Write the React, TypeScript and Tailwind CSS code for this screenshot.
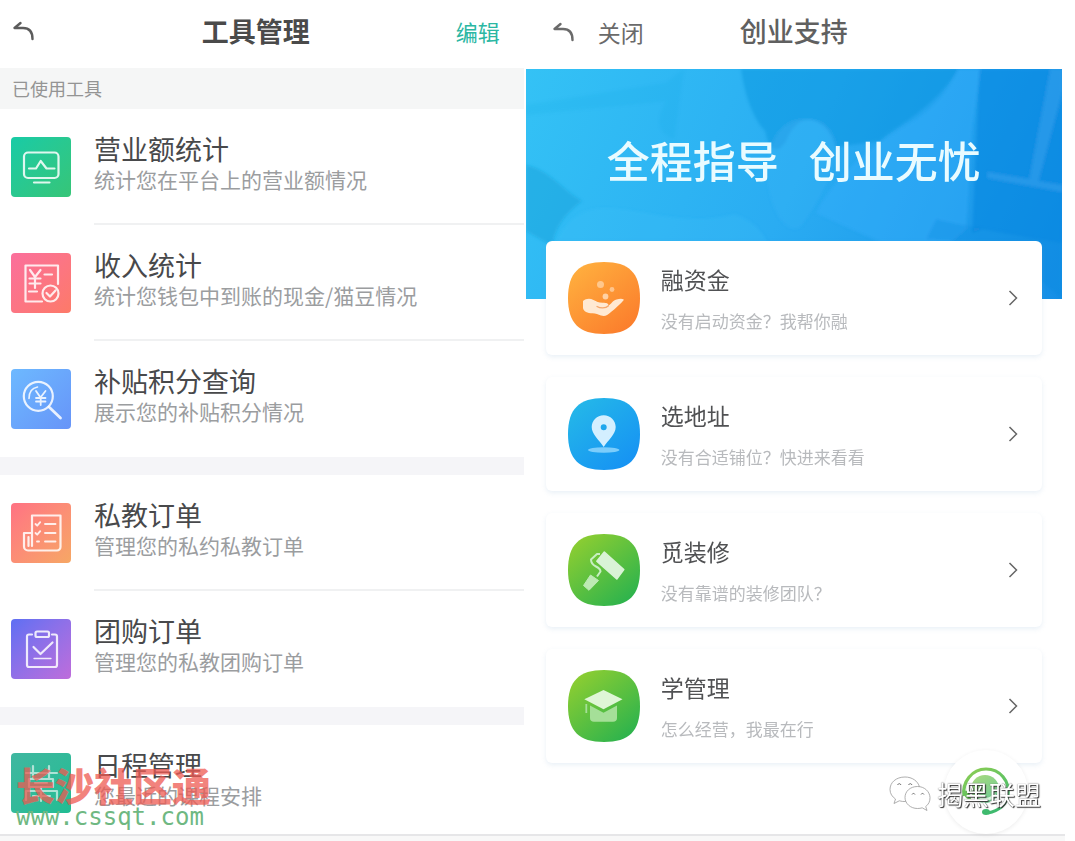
import React from "react";

type Tool = {
    title: string;
    desc: string;
    tile: string;
    icon: React.ReactNode;
};

type Support = {
    title: string;
    desc: string;
    from: string;
    to: string;
    icon: React.ReactNode;
};

const toolGroups: Tool[][] = [
    [
        {
            title: "营业额统计",
            desc: "统计您在平台上的营业额情况",
            tile: "from-[#17cba6] to-[#36c577]",
            icon: (
                <>
                    <rect x="13" y="15.5" width="34.5" height="25.5" rx="4" />
                    <path d="M18 31.5h7l4.7-7.5 5.8 7.5h8M23 45.5h15.5" />
                </>
            ),
        },
        {
            title: "收入统计",
            desc: "统计您钱包中到账的现金/猫豆情况",
            tile: "from-[#fb6f9c] to-[#fd7a68]",
            icon: (
                <>
                    <path d="M47 31V12.5H14.5v36H31" />
                    <path d="M19 17l5 7 5.5-7M24 24v11M18.5 25.5h11M18.5 30.5h11M33.5 21.5H41M18 38.5h8" />
                    <circle cx="39.5" cy="40.5" r="8" />
                    <path d="M35.5 40l3.5 3.5 5.5-6" />
                </>
            ),
        },
        {
            title: "补贴积分查询",
            desc: "展示您的补贴积分情况",
            tile: "from-[#6db9ff] to-[#6794f8]",
            icon: (
                <>
                    <circle cx="27.3" cy="27.3" r="14.5" />
                    <path d="M38 38l11.5 11" strokeWidth="2.8" />
                    <path d="M18 29.5c0-6 3-10.5 8.5-11.5" strokeWidth="1.6" />
                    <path d="M25 22l4.5 6.5L34.5 22M29.7 28.5V36M25 29h9.5M25 32.5h9.5" strokeWidth="1.8" />
                </>
            ),
        },
    ],
    [
        {
            title: "私教订单",
            desc: "管理您的私约私教订单",
            tile: "from-[#ff7283] to-[#f6a764]",
            icon: (
                <>
                    <path d="M21 43V12.5h28.5V44a3.5 3.5 0 0 1-3.5 3.5H17a4 4 0 0 1-4-4V30h8M17.5 34v9" />
                    <path d="M24.5 21l1.7 1.7 3-3.5M24.5 30l1.7 1.7 3-3.5M26 38.5h2M34 21h10.5M34 30h10.5M34 38.5h10.5" strokeWidth="1.9" />
                </>
            ),
        },
        {
            title: "团购订单",
            desc: "管理您的私教团购订单",
            tile: "from-[#5d6ff3] to-[#be6cdb]",
            icon: (
                <>
                    <path d="M21 15.5h-3a2 2 0 0 0-2 2V46a2 2 0 0 0 2 2h26a2 2 0 0 0 2-2V17.5a2 2 0 0 0-2-2h-3" />
                    <rect x="24.5" y="12.5" width="13.5" height="5.5" rx="1.5" />
                    <path d="M22.5 28l7 7 12-11.5" />
                    <path d="M23 39.5h17" strokeWidth="1.3" />
                </>
            ),
        },
    ],
    [
        {
            title: "日程管理",
            desc: "您最近的课程安排",
            tile: "from-[#3fb7a0] to-[#20bd93]",
            icon: (
                <g strokeOpacity="0.6">
                    <path d="M15 20h31M22 13v12M38 13v12M18 26h24v8H18z" />
                    <path d="M15 47V38h31v9M24 30h12M30 34v14M22 43h17" />
                </g>
            ),
        },
    ],
];

const supports: Support[] = [
    {
        title: "融资金",
        desc: "没有启动资金？我帮你融",
        from: "#ffb13f",
        to: "#fb7a2b",
        icon: (
            <g fill="#ffe9d2">
                <circle cx="32.5" cy="22.5" r="3.5" opacity="0.55" />
                <circle cx="44" cy="27.5" r="2.4" opacity="0.55" />
                <circle cx="37.5" cy="34.5" r="2.9" opacity="0.7" />
                <path d="M15 39c3-2.500 7-2.800 10.500-1 3 1.500 5 2.800 9 2.800 4.500 0 6 .8 6 2.700 2.500-1 4-5 8-6 3.500-.8 5.500-1 7.500.2-3.500 4.300-8.500 8.500-13 12.300-4 3.500-6 4.700-10 3.500-3-.9-5-2.200-8.500-2.200-5 0-9-1.800-9.500-5.300z" />
                <path d="M29 44.500c3 1.800 8.500 2.300 11.500-.8" fill="none" stroke="#f6a66a" strokeWidth="1.3" strokeLinecap="round" />
            </g>
        ),
    },
    {
        title: "选地址",
        desc: "没有合适铺位？快进来看看",
        from: "#25b9e8",
        to: "#1590f4",
        icon: (
            <>
                <ellipse cx="35.7" cy="52" rx="15.7" ry="2.8" fill="#7ccdfb" />
                <path
                    fill="#d3efff"
                    fillRule="evenodd"
                    d="M35.700 17.300c-6.800 0-12 5.200-12 11.800 0 7.400 7.800 13.400 12 19.900 4.200-6.500 12-12.500 12-19.900 0-6.600-5.200-11.800-12-11.800zm0 14.900a3 3 0 1 1 0-6 3 3 0 0 1 0 6z"
                />
            </>
        ),
    },
    {
        title: "觅装修",
        desc: "没有靠谱的装修团队？",
        from: "#93cf30",
        to: "#25b14f",
        icon: (
            <>
                <path d="M32 20h-3l-6 5.5c0 4 2 5.500 5 7s4.500 3 4.500 5l-3.500 5" fill="none" stroke="#c8efc2" strokeWidth="2" strokeLinejoin="round" />
                <path d="M36.300 18l19.500 17.500-7 9.500-20-17.700z" fill="#d9f3d6" stroke="#d9f3d6" strokeWidth="1.500" strokeLinejoin="round" />
                <path d="M22.500 41l8 5.500L21 56.300 15.500 51.500z" fill="#bdeab4" stroke="#bdeab4" strokeLinejoin="round" />
            </>
        ),
    },
    {
        title: "学管理",
        desc: "怎么经营，我最在行",
        from: "#93cf30",
        to: "#25b14f",
        icon: (
            <>
                <path d="M16.300 29.300L35.500 20l19 9.300-19 10z" fill="#dff6d6" />
                <path d="M22 35.500l13.500 7.200L49 35.500V48c0 2.500-1.500 3.700-4 3.700H26c-2.500 0-4-1.200-4-3.700z" fill="#a5df98" />
                <path d="M18.300 34v9" stroke="#a5df98" strokeWidth="1.8" />
            </>
        ),
    },
];

function BackArrow() {
    return (
        <svg width="22" height="20" viewBox="0 0 22 20" fill="none" stroke="currentColor" strokeWidth="2.4" strokeLinecap="round" strokeLinejoin="round">
            <path d="M8.500 2L2.500 7H11c6 0 9.500 4 9.500 11" />
        </svg>
    );
}

function ToolRow({ tool, divided }: { tool: Tool; divided: boolean }) {
    return (
        <a href="#tool" className="flex h-[116px] items-center pl-[11px]">
            <span className={`h-[60px] w-[60px] shrink-0 rounded bg-linear-135 ${tool.tile}`}>
                <svg width="60" height="60" viewBox="0 0 60 60" fill="none" stroke="#fff" strokeOpacity="0.85" strokeWidth="2.2" strokeLinecap="round" strokeLinejoin="round">
                    {tool.icon}
                </svg>
            </span>
            <span className={`ml-[23px] flex h-full flex-1 flex-col justify-center border-b-2 pb-1 ${divided ? "border-[#f0f1f2]" : "border-transparent"}`}>
                <span className="text-[27px] leading-[30px] text-[#48494b]">{tool.title}</span>
                <span className="text-[21px] leading-[30px] text-[#9b9d9f]">{tool.desc}</span>
            </span>
        </a>
    );
}

function ToolsPanel() {
    return (
        <section className="relative w-[48.9%] overflow-hidden pr-0.5">
            <header className="grid h-[68px] grid-cols-[1fr_auto_1fr] items-center pr-6 pb-1.5 pl-3">
                <button type="button" aria-label="返回" className="justify-self-start text-[#5c5c5c]">
                    <BackArrow />
                </button>
                <h1 className="text-[27px] font-bold text-[#4a4a4a]">工具管理</h1>
                <button type="button" className="justify-self-end text-[22px] leading-8 text-[#2bb7a3]">编辑</button>
            </header>

            <h2 className="bg-[#f5f6f6] pl-3 text-[18px] leading-[41px] text-[#949494]">已使用工具</h2>

            <div className="flex flex-col gap-[18px] bg-[#f5f5f8]">
                {toolGroups.map((group, g) => (
                    <div key={g} className="bg-white">
                        {group.map((tool, i) => (
                            <ToolRow key={tool.title} tool={tool} divided={i < group.length - 1} />
                        ))}
                    </div>
                ))}
            </div>

            {/* Site watermark */}
            <div className="pointer-events-none absolute bottom-1 left-4">
                <p className="text-[39px] leading-[40px] font-black text-[#ee5a52]/75">长沙社区通</p>
                <p className="font-['DejaVu_Sans_Mono',monospace] text-[24px] leading-[26px] text-[#6fb882]">www.cssqt.com</p>
            </div>
        </section>
    );
}

function Banner() {
    return (
        <div className="relative flex h-[230px] justify-center overflow-hidden bg-linear-115 from-[#34c2f5] via-[#2aacf2] to-[#168fe6] pt-[60px]">
            {/* Faded handshake photo */}
            <svg className="absolute inset-0 h-full w-full" viewBox="0 0 536 230" preserveAspectRatio="none">
                <defs>
                    <filter id="soft">
                        <feGaussianBlur stdDeviation="1.5" />
                    </filter>
                </defs>
                <g filter="url(#soft)">
                    <path d="M0 96c22 4 38 26 56 36-16 12-26 24-30 45L0 162z" fill="#139fd6" opacity="0.45" />
                    <path d="M158 0c-4 22-6 45-10 70-20-8-16-22-8-38L0 46V36L140 14z" fill="#149bdb" opacity="0.1" />
                    <path d="M215 0c4 30 14 52 24 62 4 22 14 24 22 8 12-30 40-22 48 8l45-6c16-16 52-30 78-72H215z" fill="#108fd9" opacity="0.4" />
                    <path d="M250 66c14-22 50-22 58 4 8 22-14 60-32 86-20 20-50-48-26-90z" fill="#40b9f8" opacity="0.25" />
                    <path d="M453 0h83v174l-80-14-10 4z" fill="#0c83dd" opacity="0.5" />
                    <path d="M432 0h22l-8 60-6 100-40 34-110-50c20-40 60-70 90-88 22-12 40-30 52-56z" fill="#35aefc" opacity="0.4" />
                    <path d="M524 0h12v22l-24 90 24 4v7l-75-14v-6l42 7z" fill="#3daaf2" opacity="0.4" />
                    <path d="M28 177c10-26 28-38 50-38 40 0 80 20 130 6 20 6 30 20 36 34l-12 51H20z" fill="#43c2f8" opacity="0.2" />
                    <path d="M410 150c20 6 80 14 126 24v56L470 174l-70-4z" fill="#0d82db" opacity="0.25" />
                </g>
            </svg>
            <p className="relative flex gap-[30px] text-[43px] leading-[60px] font-medium whitespace-nowrap text-[#e9fbff]">
                <span>全程指导</span>
                <span>创业无忧</span>
            </p>
        </div>
    );
}

function SupportCard({ item, id }: { item: Support; id: string }) {
    return (
        <a href="#support" className="flex h-[114px] items-center rounded-md bg-white pr-6 pl-[22px] shadow-[0_2px_5px_rgba(120,160,200,0.16)]">
            <svg width="72" height="72" viewBox="0 0 72 72" className="shrink-0">
                <defs>
                    <linearGradient id={id} x1="0.1" y1="0" x2="0.9" y2="1">
                        <stop stopColor={item.from} />
                        <stop offset="1" stopColor={item.to} />
                    </linearGradient>
                </defs>
                <path d="M36 0C61 0 72 11 72 36S61 72 36 72 0 61 0 36 11 0 36 0z" fill={`url(#${id})`} />
                {item.icon}
            </svg>
            <span className="ml-[21px] flex flex-1 flex-col gap-3.5 pt-1">
                <span className="text-[23px] leading-7 text-[#505153]">{item.title}</span>
                <span className="text-[17px] leading-7 text-[#b8babd]">{item.desc}</span>
            </span>
            <svg width="10" height="16" viewBox="0 0 10 16" fill="none" stroke="#666" strokeWidth="1.5">
                <path d="M1.500 1l7 7-7 7" />
            </svg>
        </a>
    );
}

function SupportPanel() {
    return (
        <section className="relative mr-[13px] flex-1">
            <header className="grid h-[69px] grid-cols-[1fr_auto_1fr] items-center px-[26px] pb-1.5">
                <div className="flex items-center gap-6 text-[#6a6a6a]">
                    <button type="button" aria-label="返回">
                        <BackArrow />
                    </button>
                    <button type="button" className="text-[23px] leading-8">关闭</button>
                </div>
                <h1 className="text-[27px] font-medium text-[#606060]">创业支持</h1>
            </header>

            <Banner />

            <div className="relative -mt-[58px] flex flex-col gap-[22px] px-5">
                {supports.map((item, i) => (
                    <SupportCard key={item.title} item={item} id={`tile-${i}`} />
                ))}
            </div>

            {/* Customer service */}
            <button type="button" aria-label="客服" className="absolute right-[34px] bottom-0 flex h-[84px] w-[84px] items-center justify-center rounded-full bg-white shadow-[0_1px_4px_rgba(0,0,0,0.08)]">
                <svg width="52" height="52" viewBox="0 0 52 52" fill="none">
                    <defs>
                        <linearGradient id="service" x1="0" y1="0" x2="0.6" y2="1">
                            <stop stopColor="#8fce52" />
                            <stop offset="1" stopColor="#3fba6e" />
                        </linearGradient>
                    </defs>
                    <circle cx="25" cy="23" r="14" fill="url(#service)" opacity="0.75" />
                    <path d="M4 30c-2-14 8-27 22-27s24 12 22 26c-1.500 9-9 16-20 18" stroke="url(#service)" strokeWidth="3.2" />
                    <path d="M3 25c4-2 7 1 8 8-4 1-7-2-8-8z" fill="#6cc45c" />
                    <ellipse cx="26" cy="46" rx="4" ry="3" fill="#3fba6e" />
                    <path d="M17 28c5 7 13 7 18 0" stroke="#d9f5dc" strokeWidth="3" />
                </svg>
            </button>

            {/* Account watermark */}
            <div className="pointer-events-none absolute right-[21px] bottom-[22px] flex items-center gap-1.5">
                <svg width="42" height="36" viewBox="0 0 42 36" fill="#fff" stroke="#9a9a9a" strokeWidth="0.8">
                    <path d="M16 1C7 1 1 6.500 1 13.500c0 4 2.200 7.300 5.500 9.500L5 27.500l5.300-2.700c2 .6 4 .8 6.200.7C30 25 32 17 30.500 11 29 5 23 1 16 1z" />
                    <path d="M28.500 10.500C21 10.500 16 15.500 16 21.500s5.500 11 12.500 11c1.700 0 3.200-.2 4.700-.7L38 34.500l-1.300-4c2.800-2 4.500-5.200 4.300-9-.3-6-5.500-11-12.500-11z" />
                    <path d="M8.500 9c.8-1.800 2.800-1.800 3.500 0M19.500 9c.8-1.800 2.800-1.800 3.500 0M23 18.500c.6-1.400 2.400-1.400 3 0M32 18.500c.6-1.400 2.400-1.400 3 0" fill="none" stroke="#555" />
                </svg>
                <span className="text-[26px] leading-9 whitespace-nowrap text-white [text-shadow:1px_1px_1px_#333,0_0_1px_#555]">揭黑联盟</span>
            </div>
        </section>
    );
}

export default function App() {
    return (
        <main className="bg-white font-['Noto_Sans_CJK_SC',sans-serif]">
            <div className="flex max-h-[834px]">
                <ToolsPanel />
                <SupportPanel />
            </div>
            <div className="mr-2.5 h-[7px] border-t-2 border-[#e6e6e8] bg-[#f8f8f8]" />
        </main>
    );
}
